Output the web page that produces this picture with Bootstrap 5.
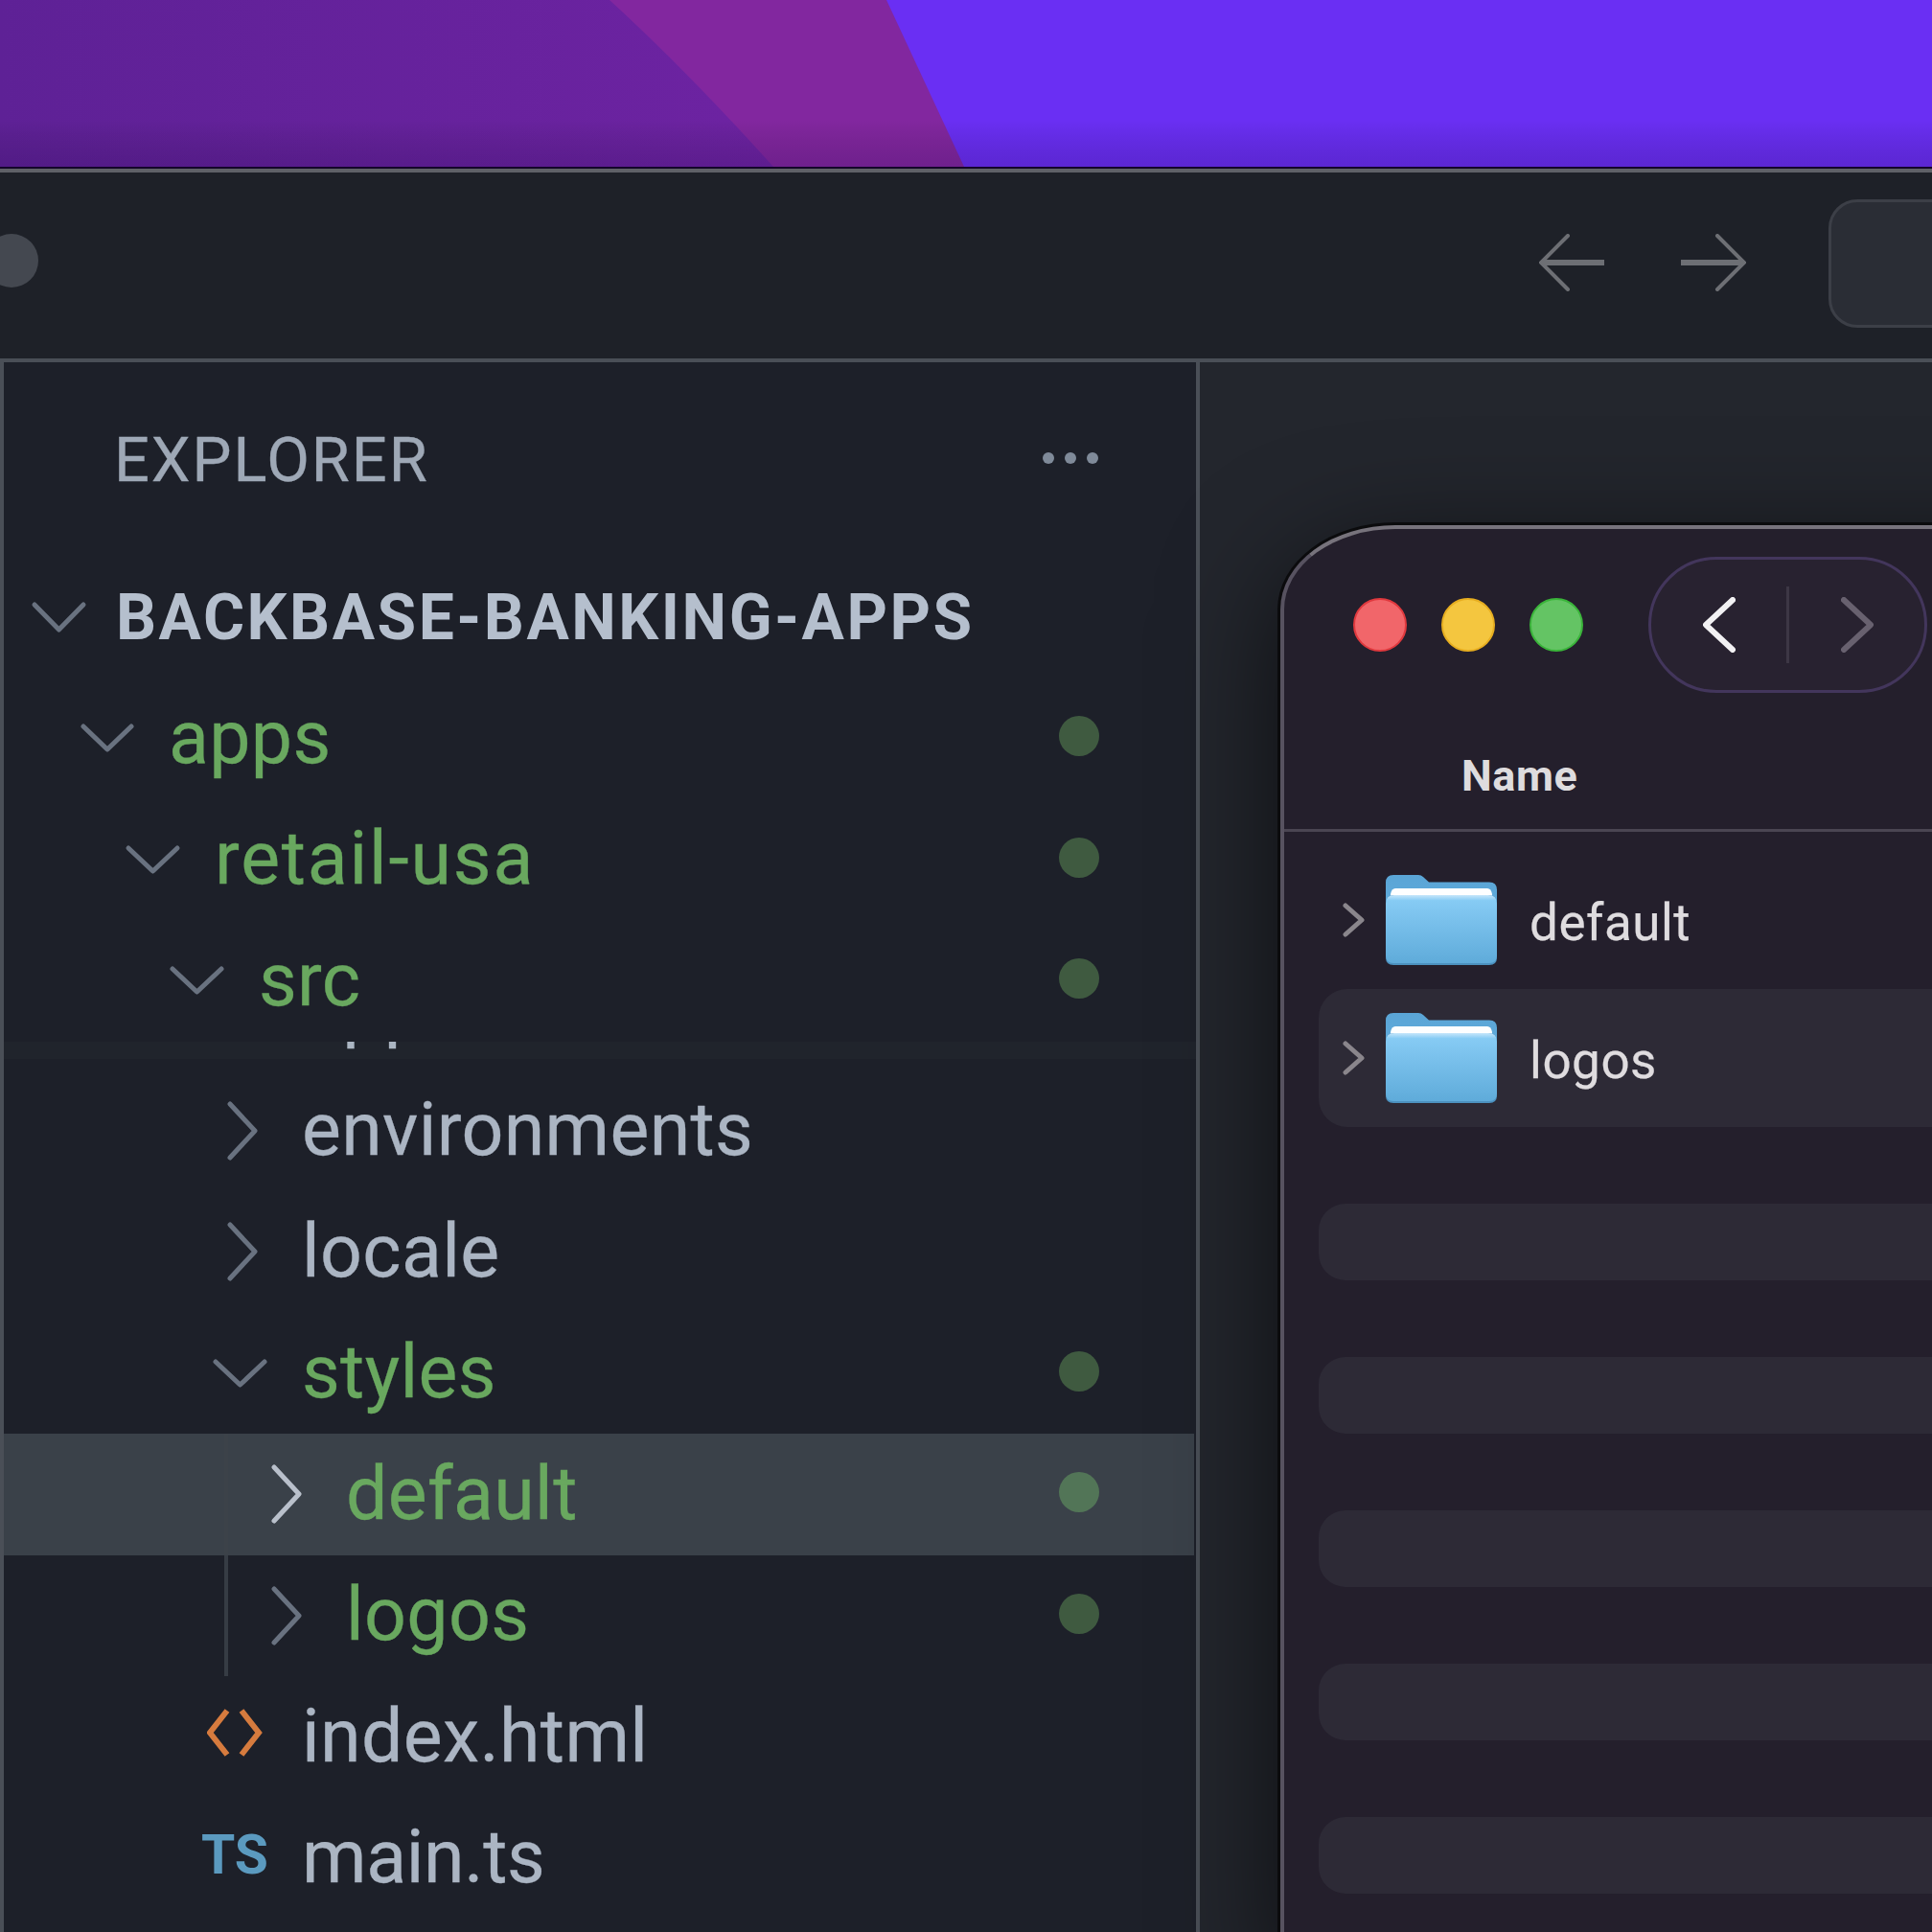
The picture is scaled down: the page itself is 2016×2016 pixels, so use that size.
<!DOCTYPE html>
<html lang="en">
<head>
<meta charset="utf-8">
<title>Explorer</title>
<link href="https://cdn.jsdelivr.net/npm/bootstrap@5.3.0/dist/css/bootstrap.min.css" rel="stylesheet">
<style>
html,body{margin:0;background:#1d2029;width:2016px;height:2016px;overflow:hidden;font-family:Roboto,"Liberation Sans",sans-serif}
.wallpaper{display:block;width:2016px;height:174px}
.vs-window{border-top:2px solid #14062a;background:#1e2128}
.title-strip{height:202px;border-top:4px solid #5f6167;border-bottom:4px solid #4a4f57}
.win-dot{width:56px;height:56px;border-radius:50%;background:#444850;margin-left:-16px;margin-top:-10px;flex:none}
.hist-arrow{width:68px;height:60px;margin-top:-6px;flex:none}
.hist-arrow+.hist-arrow{margin-left:80px}
.cmd-box{width:200px;height:134px;margin-left:86px;margin-right:-92px;background:#2a2d35;border:3px solid #3c3f47;border-radius:30px;margin-top:-4px;flex:none}
.workbench{height:1638px}
.side-panel{width:1252px;flex:none;border-left:4px solid #4a4f57;border-right:4px solid #4a4f57;background:#1d2029}
.panel-head{height:200px;padding:6px 0 0 115px;font-size:65px;color:#9ea8b6;letter-spacing:1.9px;-webkit-text-stroke:.3px currentColor}
.more-dots{margin-left:auto;margin-right:102px;margin-top:-6px;gap:11px}
.more-dots i{display:block;width:12px;height:12px;border-radius:50%;background:#7f8a99}
.tree-row{position:relative;height:126.6px;margin-right:2px;font-size:77px;letter-spacing:.35px;color:#abb5c3;white-space:nowrap;-webkit-text-stroke:.3px currentColor}
.tree-root{height:129px;font-size:66px;font-weight:700;letter-spacing:2.5px;color:#b5bfcd;padding-left:23px;padding-top:3px;-webkit-text-stroke:0}
.lv1{padding-left:78px}.lv2{padding-left:126px}.lv3{padding-left:172px}.lv4{padding-left:217px}.lv5{padding-left:263px}
.long-name{letter-spacing:1.8px}
.short-name{letter-spacing:-.35px}
.is-git{color:#69a85f}
.is-active{background:#3a4149}
.has-guide::before{content:"";position:absolute;left:230px;top:0;bottom:0;width:4px;background:#363c44}
.is-active.has-guide::before{background:#3c4249}
.tree-chev{width:94px;height:62px;flex:none;fill:none;stroke:#697280;stroke-width:5;stroke-linecap:round;stroke-linejoin:round}
.is-active .tree-chev{stroke:#b9c0cb}
.file-glyph{width:94px;height:62px;flex:none;margin-left:-5px;margin-right:5px;margin-top:-9px}
.ts-glyph{width:94px;flex:none;margin-left:-11px;margin-right:11px;margin-top:-6px;font-size:57px;font-weight:700;color:#5b9abf;letter-spacing:0;-webkit-text-stroke:0}
.git-dot{width:42px;height:42px;border-radius:50%;background:#3f5a40;margin-left:auto;margin-right:99px;margin-top:-4px;flex:none}
.is-active .git-dot{background:#527557}
.tree-scroll{position:relative;height:930px;overflow:hidden}
.tree-scroll::before{content:"";position:absolute;left:0;right:0;top:0;height:18px;background:rgba(180,255,180,.02);z-index:1}
.scrolled-off{margin-top:-97px}
.editor-pane{flex:1;background:#23262d;min-width:0}
.finder-win{position:relative;z-index:2;width:900px;height:1500px;margin:170px 0 0 84px;background:#241f2c;border:4px solid #575260;border-top-color:#77737c;border-radius:120px 0 0 0/88px 0 0 0;box-shadow:0 0 0 3px #0b0b0d,0 30px 120px rgba(0,0,0,.65);color:#dfdcdf}
.finder-bar{height:235px}
.traffic{display:block;width:56px;height:56px;border-radius:50%;border:2px solid}
.t-red{background:#f1666a;border-color:#e0393e}
.t-yellow{background:#f4c63f;border-color:#e7ae20}
.t-green{background:#64c464;border-color:#3ab53a}
.light-group{margin-left:72px;gap:36px;padding-top:72px}
.nav-pill{width:291px;height:142px;margin:29px 0 0 68px;border:3px solid #43365c;border-radius:71px;background:#282230}
.nav-half{flex:1;height:100%}
.nav-sep{width:3px;height:80px;background:#3d3745}
.nav-half svg{width:34px;height:58px;fill:none;stroke-width:6;stroke-linecap:round;stroke-linejoin:round}
.col-head{height:78px;padding-left:185px;font-size:45px;font-weight:700;line-height:45px;letter-spacing:.6px;color:#dedcde}
.head-line{height:3px;background:#4a4552}
.finder-list{padding-top:20px}
.finder-row{height:144px;margin-left:36px;border-radius:30px 0 0 30px;font-size:53px;letter-spacing:.5px;-webkit-text-stroke:.25px currentColor}
.finder-row.alt{background:#2d2a36}
.row-label{margin-top:8px}
.finder-chev{width:24px;height:36px;margin-left:25px;fill:none;stroke:#8a868c;stroke-width:5;stroke-linecap:round;stroke-linejoin:round;flex:none}
.folder-ico{width:116px;height:94px;margin-left:21px;margin-right:34px;flex:none}
.empty-row{height:80px;margin-left:36px;background:#2d2a36;border-radius:28px 0 0 28px;margin-bottom:80px}
.rows-gap{height:80px}
</style>
</head>
<body>
<svg class="wallpaper" viewBox="0 0 2016 174" aria-hidden="true">
  <defs>
    <linearGradient id="wpFade" x1="0" y1="0" x2="0" y2="1">
      <stop offset=".72" stop-color="#000" stop-opacity="0"/>
      <stop offset="1" stop-color="#1a0040" stop-opacity=".18"/>
    </linearGradient>
    <linearGradient id="wpLeft" x1="0" y1="0" x2="1" y2="0">
      <stop offset="0" stop-color="#5e2196"/>
      <stop offset="1" stop-color="#6d23a2"/>
    </linearGradient>
  </defs>
  <rect width="2016" height="174" fill="#6a2ff3"/>
  <path d="M0 0H925L1006 174H0Z" fill="#82279f"/>
  <path d="M0 0H636Q715 72 807 174H0Z" fill="url(#wpLeft)"/>
  <rect width="2016" height="174" fill="url(#wpFade)"/>
</svg>
<div class="vs-window">
  <header class="title-strip d-flex align-items-center">
    <span class="win-dot"></span>
    <div class="ms-auto d-flex align-items-center">
      <svg class="hist-arrow" viewBox="0 0 68 60" fill="none" stroke="#6d6f74" stroke-linecap="round"><path d="M30 2 2 30 30 58" stroke-width="4"/><path d="M3 30H68" stroke-width="6" stroke-linecap="butt"/></svg>
      <svg class="hist-arrow" viewBox="0 0 68 60" fill="none" stroke="#6d6f74" stroke-linecap="round"><path d="M38 2 66 30 38 58" stroke-width="4"/><path d="M0 30H65" stroke-width="6" stroke-linecap="butt"/></svg>
      <div class="cmd-box"></div>
    </div>
  </header>
  <div class="workbench d-flex">
    <aside class="side-panel">
      <div class="panel-head d-flex align-items-center">EXPLORER
        <div class="more-dots d-flex"><i></i><i></i><i></i></div>
      </div>
      <div class="tree-row tree-root d-flex align-items-center">
        <svg class="tree-chev" viewBox="0 0 94 62"><path d="M9 18 34.500 44 60 18"/></svg>BACKBASE-BANKING-APPS
      </div>
      <div class="tree-row is-git lv1 d-flex align-items-center"><svg class="tree-chev" viewBox="0 0 94 62"><path d="M5 19 30 43 55 19"/></svg>apps<span class="git-dot"></span></div>
      <div class="tree-row is-git lv2 d-flex align-items-center"><svg class="tree-chev" viewBox="0 0 94 62"><path d="M4 19 29.500 43 55 19"/></svg><span class="long-name">retail-usa</span><span class="git-dot"></span></div>
      <div class="tree-row is-git lv3 d-flex align-items-center"><svg class="tree-chev" viewBox="0 0 94 62"><path d="M4 19 29.500 43 55 19"/></svg>src<span class="git-dot"></span></div>
      <div class="tree-scroll">
        <div class="tree-row lv4 scrolled-off d-flex align-items-center"><svg class="tree-chev" viewBox="0 0 94 62"><path d="M19 3 45 31 19 59"/></svg>app</div>
        <div class="tree-row lv4 d-flex align-items-center"><svg class="tree-chev" viewBox="0 0 94 62"><path d="M19 3 45 31 19 59"/></svg>environments</div>
        <div class="tree-row lv4 d-flex align-items-center"><svg class="tree-chev" viewBox="0 0 94 62"><path d="M19 3 45 31 19 59"/></svg>locale</div>
        <div class="tree-row is-git lv4 d-flex align-items-center"><svg class="tree-chev" viewBox="0 0 94 62"><path d="M4 19 29.500 43 55 19"/></svg>styles<span class="git-dot"></span></div>
        <div class="tree-row is-git is-active has-guide lv5 d-flex align-items-center"><svg class="tree-chev" viewBox="0 0 94 62"><path d="M19 3 45 31 19 59"/></svg>default<span class="git-dot"></span></div>
        <div class="tree-row is-git has-guide lv5 d-flex align-items-center"><svg class="tree-chev" viewBox="0 0 94 62"><path d="M19 3 45 31 19 59"/></svg>logos<span class="git-dot"></span></div>
        <div class="tree-row lv4 d-flex align-items-center">
          <svg class="file-glyph" viewBox="0 0 94 62" fill="none" stroke="#d67b3e" stroke-width="6" stroke-linejoin="miter"><path d="M21 8 3 31 21 54"/><path d="M36 8 54 31 36 54"/></svg>index.html</div>
        <div class="tree-row lv4 d-flex align-items-center"><span class="ts-glyph">TS</span><span class="short-name">main.ts</span></div>
      </div>
    </aside>
    <main class="editor-pane">
      <section class="finder-win">
        <div class="finder-bar d-flex align-items-start">
          <div class="light-group d-flex">
            <span class="traffic t-red"></span><span class="traffic t-yellow"></span><span class="traffic t-green"></span>
          </div>
          <div class="nav-pill d-flex align-items-center">
            <div class="nav-half d-flex align-items-center justify-content-center"><svg viewBox="0 0 34 58" stroke="#f2f1f3"><path d="M31 3 3 29 31 55"/></svg></div>
            <span class="nav-sep"></span>
            <div class="nav-half d-flex align-items-center justify-content-center"><svg viewBox="0 0 34 58" stroke="#68616f"><path d="M3 3 31 29 3 55"/></svg></div>
          </div>
        </div>
        <div class="col-head">Name</div>
        <div class="head-line"></div>
        <div class="finder-list">
          <svg width="0" height="0" class="position-absolute" aria-hidden="true">
            <defs>
              <linearGradient id="fBack" x1="0" y1="0" x2="0" y2="1"><stop offset="0" stop-color="#5aa5d6"/><stop offset="1" stop-color="#63aede"/></linearGradient>
              <linearGradient id="fFront" x1="0" y1="0" x2="0" y2="1"><stop offset="0" stop-color="#c6e6fb"/><stop offset=".08" stop-color="#86cbf4"/><stop offset="1" stop-color="#5fabda"/></linearGradient>
              <symbol id="folderIcon" viewBox="0 0 116 94">
                <path d="M0 8Q0 0 8 0H34Q37 0 39 2L45 7.500H108Q116 7.500 116 15.500V50H0Z" fill="url(#fBack)"/>
                <path d="M10 14H106Q110 14 111 20V30H5V20Q6 14 10 14Z" fill="#fdfeff"/>
                <path d="M0 30Q0 21 9 21H107Q116 21 116 30V86Q116 94 108 94H8Q0 94 0 86Z" fill="#4c92c0"/>
                <path d="M0 30Q0 21 9 21H107Q116 21 116 30V84Q116 92 108 92H8Q0 92 0 84Z" fill="url(#fFront)"/>
              </symbol>
            </defs>
          </svg>
          <div class="finder-row d-flex align-items-center">
            <svg class="finder-chev" viewBox="0 0 24 36"><path d="M3 3 20 18 3 33"/></svg>
            <svg class="folder-ico"><use href="#folderIcon"/></svg><span class="row-label">default</span>
          </div>
          <div class="finder-row alt d-flex align-items-center">
            <svg class="finder-chev" viewBox="0 0 24 36"><path d="M3 3 20 18 3 33"/></svg>
            <svg class="folder-ico"><use href="#folderIcon"/></svg><span class="row-label">logos</span>
          </div>
          <div class="rows-gap"></div>
          <div class="empty-row"></div>
          <div class="empty-row"></div>
          <div class="empty-row"></div>
          <div class="empty-row"></div>
          <div class="empty-row"></div>
        </div>
      </section>
    </main>
  </div>
</div>
<script src="https://cdn.jsdelivr.net/npm/bootstrap@5.3.0/dist/js/bootstrap.bundle.min.js"></script>
</body>
</html>
